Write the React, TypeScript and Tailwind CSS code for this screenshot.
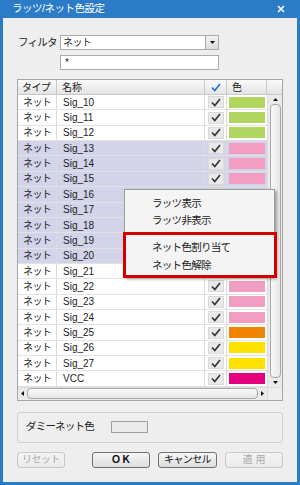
import React from "react"

const font = { fontFamily: '"Liberation Sans", "Noto Sans CJK JP", sans-serif' }

const rows: { name: string; color: string }[] = [
  { name: "Sig_10", color: "#B1D65F" },
  { name: "Sig_11", color: "#B1D65F" },
  { name: "Sig_12", color: "#B1D65F" },
  { name: "Sig_13", color: "#F19EC2" },
  { name: "Sig_14", color: "#F19EC2" },
  { name: "Sig_15", color: "#F19EC2" },
  { name: "Sig_16", color: "#F19EC2" },
  { name: "Sig_17", color: "#F19EC2" },
  { name: "Sig_18", color: "#F19EC2" },
  { name: "Sig_19", color: "#F19EC2" },
  { name: "Sig_20", color: "#F19EC2" },
  { name: "Sig_21", color: "#F19EC2" },
  { name: "Sig_22", color: "#F19EC2" },
  { name: "Sig_23", color: "#F19EC2" },
  { name: "Sig_24", color: "#F19EC2" },
  { name: "Sig_25", color: "#F08300" },
  { name: "Sig_26", color: "#FFE100" },
  { name: "Sig_27", color: "#FFE100" },
  { name: "VCC", color: "#E4007F" },
]

function Check({ color = "#333" }: { color?: string }) {
  return (
    <svg width="10" height="9" viewBox="0 0 10 9">
      <path d="M1 4.5 L3.8 7.5 L9 1" fill="none" stroke={color} strokeWidth="1.6" />
    </svg>
  )
}

function Row({ name, color, selected }: { name: string; color: string; selected: boolean }) {
  return (
    <div className={`flex h-[15.37px] border-b border-[#E2E2E2] ${selected ? "bg-[#D3D3EA]" : "bg-white"}`}>
      <div className="w-[39px] border-r border-[#DADADA] pl-[5px] flex items-center text-[10px] tracking-[-0.6px] text-[#222]">ネット</div>
      <div className="w-[148px] border-r border-[#DADADA] pl-[6px] flex items-center text-[10px] text-[#222]">{name}</div>
      <div className="w-[22px] border-r border-[#DADADA] flex items-center justify-center">
        <div className="w-[16px] h-[12px] bg-[#E9E9E9] border border-[#DADADA] flex items-center justify-center">
          <Check />
        </div>
      </div>
      <div className="w-[40px] flex items-center justify-center">
        <div className="w-[36px] h-[11px]" style={{ backgroundColor: color }} />
      </div>
    </div>
  )
}

function Button({ label, disabled, className = "" }: { label: string; disabled?: boolean; className?: string }) {
  return (
    <div
      className={`h-[16px] rounded-[3px] border flex items-center justify-center text-[10px] ${
        disabled
          ? "border-[#C8C8C8] bg-gradient-to-b from-[#F4F4F4] to-[#EAEAEA] text-[#A8A8A8]"
          : "border-[#707070] bg-gradient-to-b from-[#F6F6F6] to-[#DDDDDD] text-[#111]"
      } ${className}`}
    >
      {label}
    </div>
  )
}

export default function App() {
  return (
    <div className="w-[300px] h-[485px] bg-[#2B7BC6] flex flex-col relative overflow-hidden" style={font}>
      {/* Title bar */}
      <div className="h-[18px] flex items-center justify-between pl-[12px] pr-[15px]">
        <span className="text-[10.5px] tracking-[-0.5px] text-white">ラッツ/ネット色設定</span>
        <svg width="8" height="8" viewBox="0 0 8 8">
          <path d="M1 1 L7 7 M7 1 L1 7" stroke="white" strokeWidth="1.6" />
        </svg>
      </div>

      {/* Body */}
      <div className="flex-1 mx-[3px] mb-[3px] bg-[#EEEEEE] px-[14px] pt-[17px] flex flex-col">
        <div className="flex items-center h-[15px]">
          <span className="w-[43px] pl-[1px] text-[10.5px] tracking-[-0.8px] text-[#222]">フィルタ</span>
          <div className="w-[159px] h-[15px] bg-white border border-[#ABABAB] flex">
            <div className="flex-1 pl-[2px] flex items-center text-[10px] tracking-[-0.6px] text-[#222]">ネット</div>
            <div className="w-[13px] border-l border-[#ABABAB] bg-gradient-to-b from-[#F2F2F2] to-[#DCDCDC] flex items-center justify-center">
              <svg width="5" height="3" viewBox="0 0 5 3">
                <path d="M0 0 H5 L2.5 3 Z" fill="#111" />
              </svg>
            </div>
          </div>
        </div>
        <div className="ml-[43px] mt-[5px] w-[159px] h-[15px] bg-white border border-[#ABABAB] flex items-center pl-[4px] text-[10px] text-[#222]">
          *
        </div>

        {/* Table */}
        <div className="mt-[9px] w-[266px] border border-[#A5A5A5] bg-white flex flex-col">
          <div className="flex h-[15px] bg-gradient-to-b from-[#FAFAFA] to-[#E4E4E4] border-b border-[#C8C8C8] text-[10px] text-[#222]">
            <div className="w-[39px] border-r border-[#C8C8C8] pl-[4px] flex items-center tracking-[-0.6px]">タイプ</div>
            <div className="w-[148px] border-r border-[#C8C8C8] pl-[5px] flex items-center">名称</div>
            <div className="w-[22px] border-r border-[#C8C8C8] flex items-center justify-center">
              <Check color="#1E6FD9" />
            </div>
            <div className="w-[40px] border-r border-[#C8C8C8] pl-[5px] flex items-center">色</div>
            <div className="w-[15px]" />
          </div>
          <div className="flex">
            <div className="w-[249px] flex flex-col">
              {rows.map((r, i) => (
                <Row key={r.name} name={r.name} color={r.color} selected={i >= 3 && i <= 10} />
              ))}
            </div>
            <div className="w-[15px] bg-[#EAEAEA] border-l border-[#DCDCDC] flex flex-col items-center">
              <svg className="mt-[3px]" width="5" height="3" viewBox="0 0 5 3">
                <path d="M0 3 H5 L2.5 0 Z" fill="#111" />
              </svg>
              <div className="flex-1 w-[11px] my-[3px] rounded-[4px] border border-[#A8A8A8] bg-gradient-to-r from-[#F8F8F8] to-[#E6E6E6]" />
              <svg className="mb-[3px]" width="5" height="3" viewBox="0 0 5 3">
                <path d="M0 0 H5 L2.5 3 Z" fill="#111" />
              </svg>
            </div>
          </div>
          <div className="flex h-[13px] border-t border-[#DCDCDC]">
            <div className="w-[249px] bg-[#EAEAEA] flex items-center">
              <svg className="ml-[3px]" width="3" height="5" viewBox="0 0 3 5">
                <path d="M3 0 V5 L0 2.5 Z" fill="#111" />
              </svg>
              <div className="flex-1 h-[11px] mx-[3px] rounded-[4px] border border-[#A8A8A8] bg-gradient-to-b from-[#F8F8F8] to-[#E6E6E6]" />
              <svg className="mr-[3px]" width="3" height="5" viewBox="0 0 3 5">
                <path d="M0 0 V5 L3 2.5 Z" fill="#111" />
              </svg>
            </div>
            <div className="w-[15px] bg-[#EEEEEE] border-l border-[#DCDCDC]" />
          </div>
        </div>

        {/* Dummy net color group */}
        <div className="mt-[11px] w-[266px] h-[31px] rounded-[3px] border border-[#CFCFCF] flex items-center pl-[8px]">
          <span className="w-[85px] text-[10.5px] tracking-[-0.8px] text-[#222]">ダミーネット色</span>
          <div className="w-[37px] h-[12px] border border-[#A0A0A0] bg-[#EAEAEA]" />
        </div>

        {/* Buttons */}
        <div className="mt-[9px] flex w-[266px]">
          <Button label="リセット" disabled className="w-[48px] tracking-[-0.5px]" />
          <Button label="ＯＫ" className="w-[58px] ml-[27px] font-bold text-[9px]" />
          <Button label="キャンセル" className="w-[59px] ml-[8px] tracking-[-0.6px]" />
          <Button label="適 用" disabled className="w-[58px] ml-[8px]" />
        </div>
      </div>

      {/* Context menu */}
      <div className="absolute left-[124px] top-[189px] w-[151px] h-[88px] bg-[#F4F4F4] border border-[#9C9C9C] shadow-[2px_2px_3px_rgba(0,0,0,0.35)] pt-[5px] text-[10.5px] tracking-[-0.7px] text-[#222]">
        <div className="h-[17px] pl-[27px] flex items-center">ラッツ表示</div>
        <div className="h-[17px] pl-[27px] flex items-center">ラッツ非表示</div>
        <div className="h-[10px]" />
        <div className="h-[18px] pl-[27px] flex items-center">ネット色割り当て</div>
        <div className="h-[18px] pl-[27px] flex items-center">ネット色解除</div>
      </div>
      <div className="absolute left-[123px] top-[232px] w-[154px] h-[46px] border-[3px] border-[#D40000]" />
    </div>
  )
}
